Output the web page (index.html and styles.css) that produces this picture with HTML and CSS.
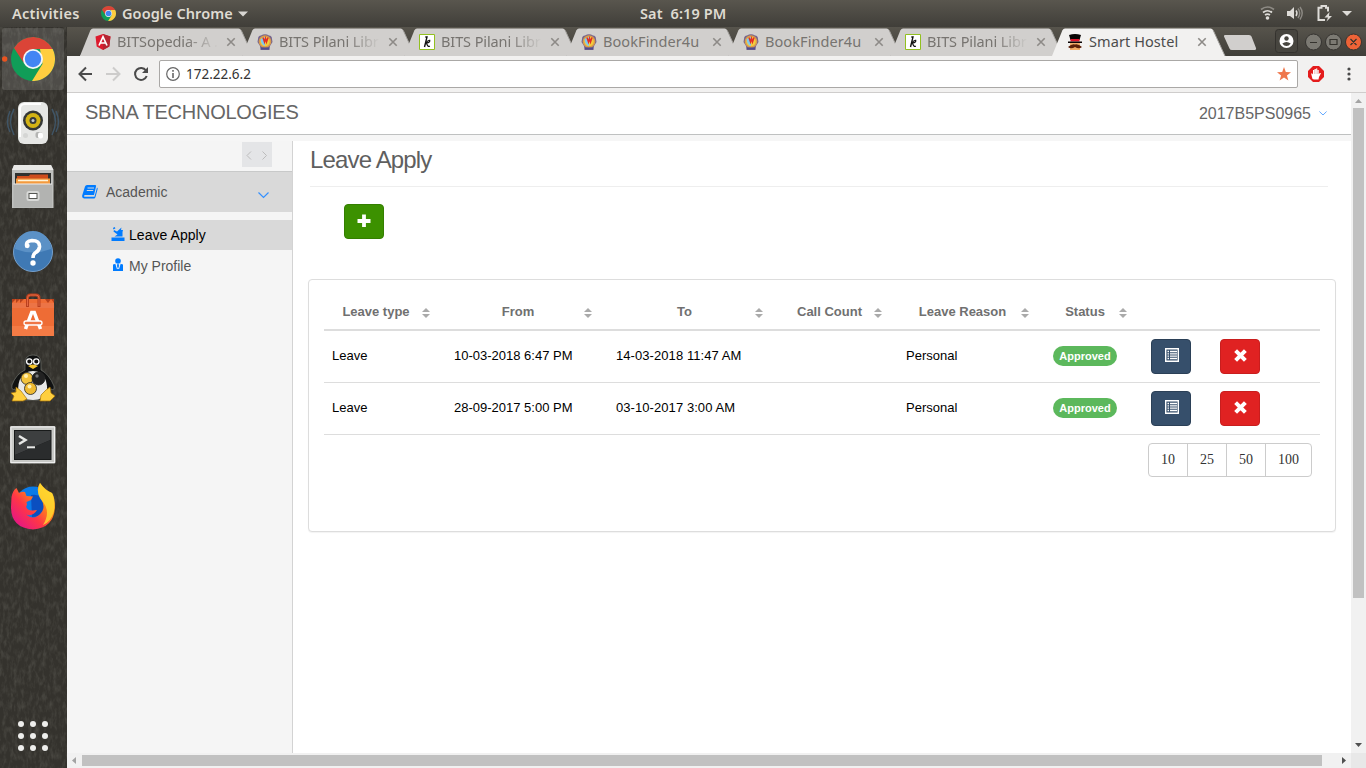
FILE: index.html
```html
<!DOCTYPE html>
<html lang="en">
<head>
<meta charset="utf-8">
<title>Smart Hostel</title>
<link rel="stylesheet" href="styles.css">
</head>
<body>
<svg class="defs" width="0" height="0">
  <symbol id="chrome" viewBox="0 0 44 44">
    <circle cx="22" cy="22" r="22" fill="#109d58"/>
    <path d="M3 11A22 22 0 0 1 41.600 12H22L12.500 25.500Z" fill="#db4437"/>
    <path d="M41.600 12A22 22 0 0 1 21 44L31.500 27 29 12Z" fill="#ffcd40"/>
    <circle cx="22" cy="22" r="10" fill="#f4f6f8"/>
    <circle cx="22" cy="22" r="8.200" fill="#4285f4"/>
  </symbol>
  <symbol id="angular" viewBox="0 0 16 16">
    <path d="M8 0 15.500 2.600 14.300 12.600 8 16 1.700 12.600.500 2.600Z" fill="#dd1b2e"/>
    <path d="M8 0 15.500 2.600 14.300 12.600 8 16Z" fill="#b52532"/>
    <path d="M4 11.500 8 2.700 12 11.500M5.600 9H10.400" fill="none" stroke="#fff" stroke-width="1.700"/>
  </symbol>
  <symbol id="bits" viewBox="0 0 16 16">
    <path d="M1 5Q1 1.500 4 1.500 8-1 12 1.500 15 1.500 15 5L15.500 8 13 12 12.500 16H3.500L3 12 .500 8Z" fill="#76658c"/>
    <circle cx="8" cy="7.500" r="6.300" fill="#d99a4c"/>
    <circle cx="8" cy="7.500" r="4.800" fill="#f3cd3c"/>
    <path d="M3.500 5 8 3V12Q4 11 3.500 5Z" fill="#7fc9ee"/>
    <path d="M6 3.500 7.500 8 8.500 4.500 9.500 8 11 3.500" stroke="#e32c27" stroke-width="1.500" fill="none"/>
    <path d="M4 14.500H12" stroke="#514c8d" stroke-width="2"/>
  </symbol>
  <symbol id="koha" viewBox="0 0 16 16">
    <path d="M.500.500H15.500V15.500H.500Z" fill="#fff" stroke="#92c020"/>
    <path d="M6.300 3H8L5.500 13" fill="none" stroke="#111" stroke-width="1.400"/>
    <path d="M6.500 9Q9.500 5.800 10.700 6.300 11.500 8.300 7.500 9 8.700 13.500 10.800 12" fill="none" stroke="#111" stroke-width="1.200"/>
  </symbol>
  <symbol id="hostel" viewBox="0 0 16 16">
    <path d="M2 1Q8-1 14 1L12.500 6H3.500Z" fill="#080404"/>
    <path d="M3.500 5H12.500V7.500H3.500Z" fill="#e1142c"/>
    <path d="M1 7.500H15V9H1Z" fill="#0a0303"/>
    <path d="M3 9H13V16H3Z" fill="#f4ae6a"/>
    <path d="M8 10.500Q11 9.500 15 13 12 15.500 8 13 4 15.500 1 13 5 9.500 8 10.500Z" fill="#5d2109"/>
  </symbol>
  <symbol id="x" viewBox="0 0 10 10"><path d="M1.300 1.300 8.700 8.700M8.700 1.300 1.300 8.700" stroke="currentColor" stroke-width="1.600" fill="none"/></symbol>
  <symbol id="tab" viewBox="0 0 174 28">
    <path d="M0 28 10.300 2.500Q11.300.500 13 .500H158.500Q160.300.500 161.300 2.500L173 28Z" fill="currentColor"/>
    <path d="M161.300 2.500 173 28" stroke="#a3a19e" fill="none"/>
  </symbol>
  <symbol id="sort" viewBox="0 0 8 10"><path d="M0 4 4 0 8 4ZM0 6H8L4 10Z" fill="#aaa"/></symbol>
  <symbol id="list" viewBox="0 0 14 14">
    <path d="M.700.700H13.300V13.300H.700Z" fill="none" stroke="#fff" stroke-width="1.400"/>
    <path d="M2.500 3.500H4M5 3.500H12M2.500 5.800H4M5 5.800H12M2.500 8.100H4M5 8.100H12M2.500 10.500H4M5 10.500H12" stroke="#fff" stroke-width="1.300"/>
  </symbol>
  <symbol id="remove" viewBox="0 0 12 12"><path d="M1.500 1.500 10.500 10.500M10.500 1.500 1.500 10.500" stroke="#fff" stroke-width="3.700"/></symbol>
</svg>

<header class="topbar">
  <span class="activities">Activities</span>
  <svg class="top-chrome"><use href="#chrome"/></svg>
  <span class="app-name">Google Chrome</span>
  <svg class="caret" viewBox="0 0 10 6"><path d="M0 .500H10L5 5.500Z" fill="#d8d6d2"/></svg>
  <span class="clock">Sat&nbsp; 6:19 PM</span>
  <svg class="indicators" viewBox="0 0 100 27" fill="none" stroke="#dedcd8">
    <path d="M1 9.500Q7.500 4.500 14 9.500" stroke="#8d8a84" stroke-width="1.700"/>
    <path d="M3 12.500Q7.500 9 12 12.500M5 15Q7.500 13.300 10 15" stroke-width="1.700"/>
    <circle cx="7.500" cy="18" r="1.800" fill="#dedcd8" stroke="none"/>
    <path d="M27 11H30L34 7V19L30 16H27Z" fill="#dedcd8" stroke="none"/>
    <path d="M36 10.500Q38 13 36 16" stroke-width="1.400"/>
    <path d="M38 8.500Q41.500 13 38 18M40 7Q44.500 13 40 19.500" stroke="#8d8a84" stroke-width="1.400"/>
    <path d="M68 11.500V7.800H66V6H61.500V7.800H58.500V20H65" stroke-width="2"/>
    <path d="M69.500 12 64.500 17.500H68L66.500 21.500 72 16H69Z" fill="#dedcd8" stroke="none"/>
    <path d="M82 11H92L87 16Z" fill="#dedcd8" stroke="none"/>
  </svg>
</header>

<div class="desktop">
  <nav class="dock">
    <svg class="grain" width="67" height="741"><filter id="stone" x="0" y="0" width="100%" height="100%"><feTurbulence type="fractalNoise" baseFrequency=".28 .12" numOctaves="3" seed="5"/><feColorMatrix values="0 0 0 0 .55  0 0 0 0 .55  0 0 0 0 .48  1.500 0 0 0 -.600"/></filter><rect width="67" height="741" filter="url(#stone)"/></svg>
    <svg class="slot" viewBox="0 0 66 64">
      <rect x="2" y="1" width="62" height="62" rx="3" fill="#fff" fill-opacity=".13"/>
      <circle cx="4.700" cy="32" r="2.700" fill="#e95420"/>
      <use href="#chrome" x="11" y="10" width="44" height="44"/>
    </svg>
    <svg class="slot" viewBox="0 0 66 64">
      <path d="M14 18Q7 30 14 44M10 20Q5 31 10 41M52 18Q59 30 52 44M56 20Q61 31 56 41" fill="none" stroke="#405566" stroke-width="1.500"/>
      <rect x="18" y="11" width="30" height="42" rx="6" fill="#e6e7e5"/>
      <path d="M20 46V18Q20 13 25 13H41" fill="none" stroke="#fff" stroke-width="2"/>
      <circle cx="33" cy="29.500" r="10" fill="#343735"/><circle cx="33" cy="29.500" r="7.500" fill="#d2b315"/>
      <circle cx="33" cy="29.500" r="3.500" fill="#363a3d"/><circle cx="33" cy="29.500" r="1.500" fill="#c3cbd0"/>
      <rect x="35.500" y="41" width="7" height="6" rx="2" fill="#b4b5b3"/><rect x="38" y="41.500" width="5" height="6" rx="2" fill="#fff"/>
      <circle cx="25.500" cy="44.500" r="2.500" fill="#d5d6d4"/>
    </svg>
    <svg class="slot" viewBox="0 0 66 64">
      <path d="M14 10H51L53.500 15V53H12V15Z" fill="#bfc0be"/><path d="M14 10H51L53.500 15H12Z" fill="#e8e8e6"/>
      <rect x="15" y="18" width="36" height="12" fill="#30312f"/>
      <path d="M17 21H29L30 19.500H48V30H17Z" fill="#cf4d1c"/><path d="M16 23.500H50V30H16Z" fill="#f39a3e"/><path d="M18 25.500H48" stroke="#fff4d9" stroke-width="1.500"/>
      <path d="M13.500 29H52V52.500H13.500Z" fill="#b2b3b1"/><path d="M13.500 29H52" stroke="#eee"/>
      <rect x="26.500" y="36" width="13" height="10" rx="2.500" fill="#d8d9d7"/><rect x="29" y="38.500" width="8" height="5" fill="#fff" stroke="#555753"/>
    </svg>
    <svg class="slot" viewBox="0 0 66 64">
      <circle cx="33" cy="33" r="19.500" fill="#3f79b4" stroke="#75a0cc"/><path d="M15 30A18 18 0 0 1 51 30Q33 37 15 30Z" fill="#5b91c6"/>
      <path d="M27 28Q25 22 32 21.500 40 21.500 39.500 28 39 32 35 34 33 35.500 33 39" fill="none" stroke="#fff" stroke-width="3.600"/><circle cx="27.300" cy="26.800" r="2.400" fill="#fff"/><circle cx="33" cy="44" r="2.700" fill="#fff"/>
    </svg>
    <svg class="slot" viewBox="0 0 66 64">
      <path d="M12 16H54V21H12Z" fill="#b5401b"/><path d="M12 20 16 16V20L20 16V20L24 16H45L48 20 51 16 54 20V53H12Z" fill="#ee6c35"/>
      <path d="M12 20H54V25H12Z" fill="#ec7446"/><path d="M12 43H54V53H12Z" fill="#f47b45"/>
      <path d="M27.500 24V15Q27.500 12 30.500 12H36Q39 12 39 15V24" fill="none" stroke="#b9401e" stroke-width="3"/><path d="M27.500 23V15Q27.500 12 30.500 12H36Q39 12 39 15V23" fill="none" stroke="#e26843"/>
      <path d="M25.500 46 31.700 29.500H34.300L40.500 46" fill="none" stroke="#fff" stroke-width="3.500"/><rect x="24" y="38" width="18" height="4" rx="2" fill="#ef7544" stroke="#fff" stroke-width="1.300"/>
    </svg>
    <svg class="slot" viewBox="0 0 66 64">
      <path d="M25 16Q25 8 33 8 41 8 41 16L41 23Q49 27 54 39 55 44 51 42 49 51 42 53H25Q17 50 15 42 11 44 12 38 16 27 25 23Z" fill="#101111" stroke="#70726d" stroke-width=".700"/>
      <path d="M25 26Q33 22 41 26 48 33 47 44 44 53 33 53 21 53 18 43 18 31 25 26Z" fill="#e9e9e8"/>
      <circle cx="29.300" cy="14.500" r="2.700" fill="#111" stroke="#fff" stroke-width="1.300"/><circle cx="36.300" cy="14.500" r="2.700" fill="#111" stroke="#fff" stroke-width="1.300"/>
      <path d="M28 19Q33 16 38 19L33 22Z" fill="#f7c62c"/>
      <g stroke="#222" stroke-width=".800"><circle cx="27" cy="31.500" r="6" fill="#f3c33c"/><circle cx="38.500" cy="31.500" r="6.500" fill="#222"/><circle cx="30.500" cy="41.500" r="6" fill="#efba31"/></g><circle cx="26" cy="29" r="2" fill="#fff0b1"/><circle cx="29.500" cy="39.500" r="2" fill="#fff0b1"/><circle cx="37" cy="29" r="1.700" fill="#777"/>
      <path d="M16 40 21 44 27 52 23 54H12L14 49 11 46 16 45ZM50 40 46 43 41 48 40 54H50L55 49 51 46Z" fill="#ffcf3e" stroke="#a97406" stroke-width=".700"/>
    </svg>
    <svg class="slot" viewBox="0 0 66 64">
      <rect x="10" y="15" width="45.500" height="37.500" rx="1.500" fill="#c8c9c6"/><rect x="11" y="16" width="43.500" height="35.500" fill="none" stroke="#eee"/>
      <rect x="14" y="19" width="37.500" height="30" fill="#181a1a"/><path d="M15 20H50.500V29L15 44Z" fill="#3d3f40"/><path d="M15 44 50.500 29V48H15Z" fill="#2a2c2d"/>
      <path d="M19 25 25.500 29 19 33" fill="none" stroke="#e8e9e7" stroke-width="2.500"/><path d="M27 36.300H35" stroke="#e8e9e7" stroke-width="2"/>
    </svg>
    <svg class="slot" viewBox="0 0 66 64">
      <defs><linearGradient id="fox" x1="0" y1="1" x2="1" y2="0"><stop offset=".1" stop-color="#e31587"/><stop offset=".4" stop-color="#ff3647"/><stop offset=".65" stop-color="#ff8b16"/><stop offset="1" stop-color="#ffe42b"/></linearGradient></defs>
      <circle cx="33" cy="30" r="18.500" fill="#0a7be8"/><path d="M31 20Q43 18 45 30 45 42 32 42Z" fill="#0b4fc0"/>
      <path d="M11.500 22Q13 15 16.500 13L19 18Q22 16 25 17L26.500 21 33 21.500 31 25 26.500 27 27 30Q25 32 28 34.500 31 36 37 35 33 42 26 39.500 34 46 41 38 46 32 41 24 35 15 40 8 45 15 52 18 55 23 55 32 54 53 33 54.500 11 53 11 32Z" fill="url(#fox)"/>
      <path d="M40 8Q45 16 52 18 55 24 54 36 51 47 43 50 51 37 43 27 35 19 40 8Z" fill="#ffdc32" fill-opacity=".8"/>
    </svg>
    <svg class="apps" viewBox="0 0 30 30" fill="#eeeeec"><circle cx="3" cy="3" r="3"/><circle cx="15" cy="3" r="3"/><circle cx="27" cy="3" r="3"/><circle cx="3" cy="15" r="3"/><circle cx="15" cy="15" r="3"/><circle cx="27" cy="15" r="3"/><circle cx="3" cy="27" r="3"/><circle cx="15" cy="27" r="3"/><circle cx="27" cy="27" r="3"/></svg>
  </nav>

  <section class="browser">
    <div class="tabs">
      <div class="tab"><svg class="shape"><use href="#tab"/></svg><svg class="fav"><use href="#angular"/></svg><span class="label fade">BITSopedia- A .</span><svg class="close"><use href="#x"/></svg></div>
      <div class="tab"><svg class="shape"><use href="#tab"/></svg><svg class="fav"><use href="#bits"/></svg><span class="label fade">BITS Pilani Libr</span><svg class="close"><use href="#x"/></svg></div>
      <div class="tab"><svg class="shape"><use href="#tab"/></svg><svg class="fav"><use href="#koha"/></svg><span class="label fade">BITS Pilani Libr</span><svg class="close"><use href="#x"/></svg></div>
      <div class="tab"><svg class="shape"><use href="#tab"/></svg><svg class="fav"><use href="#bits"/></svg><span class="label book">BookFinder4u</span><svg class="close"><use href="#x"/></svg></div>
      <div class="tab"><svg class="shape"><use href="#tab"/></svg><svg class="fav"><use href="#bits"/></svg><span class="label book">BookFinder4u</span><svg class="close"><use href="#x"/></svg></div>
      <div class="tab"><svg class="shape"><use href="#tab"/></svg><svg class="fav"><use href="#koha"/></svg><span class="label fade">BITS Pilani Libr</span><svg class="close"><use href="#x"/></svg></div>
      <div class="tab active"><svg class="shape"><use href="#tab"/></svg><svg class="fav"><use href="#hostel"/></svg><span class="label book">Smart Hostel</span><svg class="close"><use href="#x"/></svg></div>
      <svg class="window-controls" viewBox="0 0 142 29">
        <path d="M0 9.500Q-.500 8 1 8H25Q27 8 27.500 9.500L32 21Q32.500 23 30.500 23H8Q6 23 5.500 21.500Z" fill="#d1cfcd"/>
        <rect x="51.500" y="2.500" width="22" height="23" rx="3" fill="#47453f" stroke="#34322e"/>
        <circle cx="62.500" cy="14" r="7" fill="#fff"/><circle cx="62.500" cy="11.500" r="2.200" fill="#47453f"/><path d="M58.300 16.500Q62.500 13.500 66.700 16.500 65 19 62.500 19 60 19 58.300 16.500Z" fill="#47453f"/>
        <g stroke="#353330"><circle cx="89.500" cy="15" r="8" fill="#7c7a73"/><circle cx="109.500" cy="15" r="8" fill="#7c7a73"/><circle cx="129.500" cy="15" r="8" fill="#ee6337"/></g>
        <path d="M86 15.500H93M106 12.500H113V17.500H106ZM126.500 12 132.500 18M132.500 12 126.500 18" fill="none" stroke="#35332e" stroke-width="1.200"/>
      </svg>
    </div>
    <div class="toolbar">
      <svg class="nav-icons" viewBox="0 0 76 20" fill="none" stroke="#4a4a4a" stroke-width="2">
        <path d="M14 10H2M8 3.500 1.500 10 8 16.500"/>
        <path d="M28 10H41M35 3.500 41.500 10 35 16.500" stroke="#cdcccb"/>
        <path d="M68 6.500A6 6 0 1 0 68.700 12"/><path d="M70 3V9H64Z" fill="#4a4a4a" stroke="none"/>
      </svg>
      <div class="address">
        <svg class="info" viewBox="0 0 14 14"><circle cx="7" cy="7" r="6.300" fill="none" stroke="#666" stroke-width="1.200"/><path d="M7 6V11M7 3V4.700" stroke="#666" stroke-width="1.600"/></svg>
        <span class="url">172.22.6.2</span>
        <svg class="star" viewBox="0 0 14 14"><path d="M7 0 8.800 5 14 5.200 9.900 8.400 11.400 13.500 7 10.500 2.600 13.500 4.100 8.400 0 5.200 5.200 5Z" fill="#ef764b"/></svg>
      </div>
      <svg class="adblock" viewBox="0 0 16 16"><path d="M5 0H11L16 5V11L11 16H5L0 11V5Z" fill="#e41c1c"/><path d="M4.500 13 3.200 8Q3.500 6.500 5 8.500V4H6.500V3H8V2.500H9.300V4H10.700V8Q12 6.500 13 7.300L11 11 10.500 13.500H6Z" fill="#fff"/><path d="M6.500 4V8M8 3V8M9.400 4V8" stroke="#d99" stroke-width=".500"/></svg>
      <svg class="dots" viewBox="0 0 4 14" fill="#4a4a4a"><circle cx="2" cy="2" r="1.600"/><circle cx="2" cy="7" r="1.600"/><circle cx="2" cy="12" r="1.600"/></svg>
    </div>

    <div class="viewport">
      <div class="page">
        <header class="page-head">
          <span class="brand">SBNA TECHNOLOGIES</span>
          <span class="user">2017B5PS0965</span>
          <svg class="user-caret" viewBox="0 0 8 5"><path d="M.400.500 4 4 7.600.500" fill="none" stroke="#64a9ff"/></svg>
        </header>
        <div class="page-body">
          <aside class="side">
            <div class="collapse"><svg viewBox="0 0 30 25" fill="none" stroke="#bcbcbc"><path d="M9 9.500 5 13.500 9 17.500M20.500 9.500 24.500 13.500 20.500 17.500"/></svg></div>
            <div class="group">
              <svg class="book-icon" viewBox="0 0 16 14"><path d="M5 0H13Q14.500 0 14 1.500L12 10H3Q1.500 10.500 2.500 11.800H12.500L15 2.500Q16 3 15.500 4.500L13.500 12Q13 13.500 12 13.500H2Q-.500 13 .300 10L3 1.500Q3.500 0 5 0Z" fill="#007bff"/><path d="M5.500 3H12M4.800 5.500H11.200" stroke="#d9d9d9"/></svg>
              <span>Academic</span>
              <svg class="chev" viewBox="0 0 11 7"><path d="M.500.500 5.500 5.500 10.500.500" fill="none" stroke="#3490ff" stroke-width="1.200"/></svg>
            </div>
            <a class="item current"><svg viewBox="0 0 14 14" fill="#007bff"><path d="M.500 10.500H13.500V14H.500ZM3 3 6 4.500 10.500.500 10 3 12 3 11.500 5V9.500H3.500L6.500 7.500 2.500 4.500ZM2 1 3.500 0 4.500 1.300 2.500 2.500Z"/></svg><span>Leave Apply</span></a>
            <a class="item"><svg viewBox="0 0 14 14" fill="#007bff"><circle cx="7" cy="3" r="2.800"/><path d="M2 6.500 4.800 5.800 7 11.500 9.200 5.800 12 6.500V13H2Z"/><path d="M6.300 6H7.700L8.200 9.500 7 11.500 5.800 9.500Z"/><path d="M4.900 6 6.400 11M9.100 6 7.600 11" stroke="#f5f5f5" stroke-width="1"/></svg><span>My Profile</span></a>
          </aside>
          <main class="content">
            <h1>Leave Apply</h1>
            <button class="btn add"><svg viewBox="0 0 14 14"><path d="M7 .500V13M.500 7H13.500" stroke="#fff" stroke-width="3.800"/></svg></button>
            <section class="panel">
              <table>
                <colgroup><col class="c1"><col class="c2"><col class="c3"><col class="c4"><col class="c5"><col class="c6"><col class="c7"><col class="c8"></colgroup>
                <thead><tr>
                  <th><div>Leave type<svg><use href="#sort"/></svg></div></th><th><div>From<svg><use href="#sort"/></svg></div></th><th><div>To<svg><use href="#sort"/></svg></div></th><th><div>Call Count<svg><use href="#sort"/></svg></div></th><th><div>Leave Reason<svg><use href="#sort"/></svg></div></th><th><div>Status<svg><use href="#sort"/></svg></div></th><th></th><th></th>
                </tr></thead>
                <tbody>
                  <tr><td>Leave</td><td>10-03-2018 6:47 PM</td><td class="to">14-03-2018 11:47 AM</td><td></td><td>Personal</td><td><span class="badge">Approved</span></td><td class="action"><button class="btn view"><svg><use href="#list"/></svg></button></td><td class="action"><button class="btn del"><svg><use href="#remove"/></svg></button></td></tr>
                  <tr><td>Leave</td><td>28-09-2017 5:00 PM</td><td class="to">03-10-2017 3:00 AM</td><td></td><td>Personal</td><td><span class="badge">Approved</span></td><td class="action"><button class="btn view"><svg><use href="#list"/></svg></button></td><td class="action"><button class="btn del"><svg><use href="#remove"/></svg></button></td></tr>
                </tbody>
              </table>
              <div class="pager"><span>10</span><span>25</span><span>50</span><span>100</span></div>
            </section>
          </main>
        </div>
      </div>
      <div class="vbar"><svg viewBox="0 0 15 15"><path d="M4 10H11L7.500 6Z" fill="#a3a3a3"/></svg><div class="vthumb"></div><svg viewBox="0 0 15 15"><path d="M4 5H11L7.500 9Z" fill="#505050"/></svg></div>
      <div class="hbar"><svg viewBox="0 0 15 15"><path d="M9 4V11L5 7.500Z" fill="#a3a3a3"/></svg><div class="hthumb"></div><svg viewBox="0 0 15 15"><path d="M6 4V11L10 7.500Z" fill="#505050"/></svg></div>
      <div class="corner"></div>
    </div>
  </section>
</div>
</body>
</html>
```
FILE: styles.css
```css
* { box-sizing: border-box; }
body { margin: 0; width: 1366px; height: 768px; overflow: hidden; font-family: "Liberation Sans", Arial, sans-serif; }
svg { display: block; flex: none; }
.defs { position: absolute; }

.topbar { height: 27px; display: flex; align-items: center; background: linear-gradient(#59564e, #403e39); color: #dfdbd2; font: 600 14.500px/27px "Noto Sans", sans-serif; white-space: nowrap; }
.topbar span { flex: none; }
.activities { width: 89px; padding-left: 12px; letter-spacing: .300px; }
.top-chrome { width: 15px; height: 15px; margin: 0 6px 0 12px; }
.app-name { width: 116px; letter-spacing: .080px; }
.caret { width: 10px; height: 6px; }
.clock { width: 100px; margin-left: 392px; letter-spacing: .120px; }
.topbar span { padding-bottom: 1px; }
.indicators { width: 100px; height: 27px; margin-left: auto; margin-right: 6px; }

.desktop { display: flex; height: 741px; }
.dock { width: 67px; position: relative; display: flex; flex-direction: column; background: #34322d; }
.grain { position: absolute; left: 0; top: 0; opacity: .2; }
.slot { position: relative; width: 66px; height: 64px; }
.apps { position: relative; width: 30px; height: 30px; margin: auto 0 17px 18px; }

.browser { width: 1299px; display: flex; flex-direction: column; }
.tabs { height: 29px; padding: 1px 0 0 13px; display: flex; background: linear-gradient(#57544c, #403e39); }
.tab { width: 174px; height: 28px; margin-right: -12px; flex: none; position: relative; display: flex; align-items: center; padding-left: 15px; color: #d1cfcd; }
.shape { position: absolute; left: 0; top: 0; width: 174px; height: 28px; }
.tab:not(.active) { box-shadow: inset 0 -1px #aaa7a4; }
.fav { position: relative; width: 16px; height: 16px; }
.label { position: relative; width: 103px; margin-left: 6px; padding-bottom: 1px; color: #777470; font: 14.500px/27px "Noto Sans", sans-serif; letter-spacing: -.100px; white-space: nowrap; }
.book { letter-spacing: .080px; }
.fade { -webkit-mask-image: linear-gradient(90deg, #000 68px, transparent 101px); mask-image: linear-gradient(90deg, #000 68px, transparent 101px); }
.close { position: relative; width: 10px; height: 10px; margin-left: 6px; color: #8d8a87; }
.active { color: #f2f1f0; z-index: 1; }
.active .label { width: 102px; color: #4c4c4c; }
.window-controls { width: 142px; height: 29px; margin: -1px 0 0 10px; position: relative; }

.toolbar { height: 37px; display: flex; align-items: center; background: #f2f1f0; border-bottom: 1px solid #cfcdcc; }
.nav-icons { width: 76px; height: 20px; margin-left: 11px; }
.address { width: 1139px; height: 28px; margin-left: 5px; padding: 0 6px; display: flex; align-items: center; background: #fff; border: 1px solid #aaa8a6; border-radius: 2px; }
.info { width: 14px; height: 14px; }
.url { margin-left: 6px; font: 13.500px/26px "Noto Sans", sans-serif; letter-spacing: 0; color: #333; }
.star { width: 14px; height: 14px; margin-left: auto; }
.adblock { width: 16px; height: 16px; margin-left: 10px; }
.dots { width: 4px; height: 14px; margin-left: 23px; }

.viewport { height: 675px; display: grid; grid-template: 660px 15px / 1284px 15px; }
.page { display: flex; flex-direction: column; background: #f6f6f6; }
.page-head { height: 42px; display: flex; align-items: center; padding: 0 24px 3px 18px; background: #fff; border-bottom: 1px solid #bfc1c1; color: #666; }
.brand { font-size: 20px; letter-spacing: -.230px; }
.user { margin-left: auto; padding-top: 3px; font-size: 16px; }
.user-caret { width: 8px; height: 5px; margin: 3px 0 0 8px; }
.page-body { height: 618px; display: flex; }
.side { width: 226px; background: #f5f5f5; display: flex; flex-direction: column; font-size: 14px; color: #555; margin-top: 6px; border-right: 1px solid #d3d3d3; }
.collapse { height: 31px; padding: 1px 20px 5px 175px; border-bottom: 1px solid #c8c9c9; }
.collapse svg { width: 30px; height: 25px; background: #e4e5e7; }
.group { height: 40px; background: #d9d9d9; display: flex; align-items: center; padding: 0 23px 0 15px; margin-bottom: 8px; }
.book-icon { width: 16px; height: 14px; margin-right: 8px; }
.chev { width: 11px; height: 7px; margin: 6px 0 0 auto; }
.item { height: 30px; display: flex; align-items: center; gap: 4px; padding-left: 44px; margin-bottom: 1px; }
.item svg { width: 14px; height: 14px; margin-bottom: 2px; }
.current { background: #d9d9d9; color: #000; }
.current span { letter-spacing: .050px; }
.content { flex: 1; margin-top: 6px; background: #fff; padding: 0 15px; display: flex; flex-direction: column; align-items: flex-start; }
h1 { width: 1018px; height: 46px; margin: 0 0 17px 2px; border-bottom: 1px solid #eee; color: #5f5f5f; font: 24px/38px "Liberation Sans", Arial, sans-serif; letter-spacing: -.850px; }
.btn { width: 40px; height: 35px; padding: 0 0 2px; display: flex; align-items: center; justify-content: center; border: 1px solid; border-radius: 4px; }
.btn svg { width: 14px; height: 14px; }
.add { margin: 0 0 40px 36px; padding-right: 1px; background: #3c9100; border-color: #347f00; }
.view { padding: 0 0 3px 1px; background: #364f6b; border-color: #2b4057; }
.del { padding-bottom: 3px; background: #e02222; border-color: #c91e1e; }
.del svg { width: 13px; height: 13px; }
.panel { width: 1028px; height: 253px; padding: 15px; border: 1px solid #ddd; border-radius: 4px; box-shadow: 0 1px 1px rgba(0,0,0,.05); background: #fff; }
table { width: 996px; table-layout: fixed; border-collapse: separate; border-spacing: 0; font-size: 13px; color: #000; }
.c1 { width: 122px; } .c2 { width: 162px; } .c3 { width: 171px; } .c4 { width: 119px; } .c5 { width: 147px; } .c6 { width: 98px; } .c7 { width: 69px; } .c8 { width: 108px; }
th { height: 36px; padding: 0; border-bottom: 2px solid #ddd; color: #707070; }
th div { display: flex; position: relative; justify-content: center; padding: 0 18px 1px 0; }
th svg { position: absolute; right: 16px; top: 4px; width: 8px; height: 10px; }
td { height: 52px; padding: 0 8px 2px; border-bottom: 1px solid #ddd; white-space: nowrap; line-height: 18px; }
.to { letter-spacing: .070px; }
.action { padding-bottom: 0; }
.badge { display: block; width: 64px; height: 20px; border-radius: 10px; background: #5cb85c; color: #fff; font: bold 11px/20px "Liberation Sans", Arial, sans-serif; text-align: center; }
.pager { width: 164px; height: 34px; margin: 8px 8px 0 auto; display: flex; border: 1px solid #ccc; border-radius: 4px; font: 14px/32px "Liberation Serif", serif; color: #333; }
.pager span { flex: none; width: 39px; text-align: center; border-right: 1px solid #ccc; }
.pager span:last-child { width: 45px; border: 0; }
.vbar { display: flex; flex-direction: column; background: #f1f1f1; }
.vbar svg, .hbar svg { width: 15px; height: 15px; }
.vthumb { width: 11px; height: 490px; margin: 0 0 auto 2px; background: #c1c1c1; }
.hbar { display: flex; background: #f1f1f1; }
.hthumb { width: 1240px; height: 11px; margin: 2px auto 0 0; background: #c1c1c1; }
.corner { background: #e8e8e8; }
```
